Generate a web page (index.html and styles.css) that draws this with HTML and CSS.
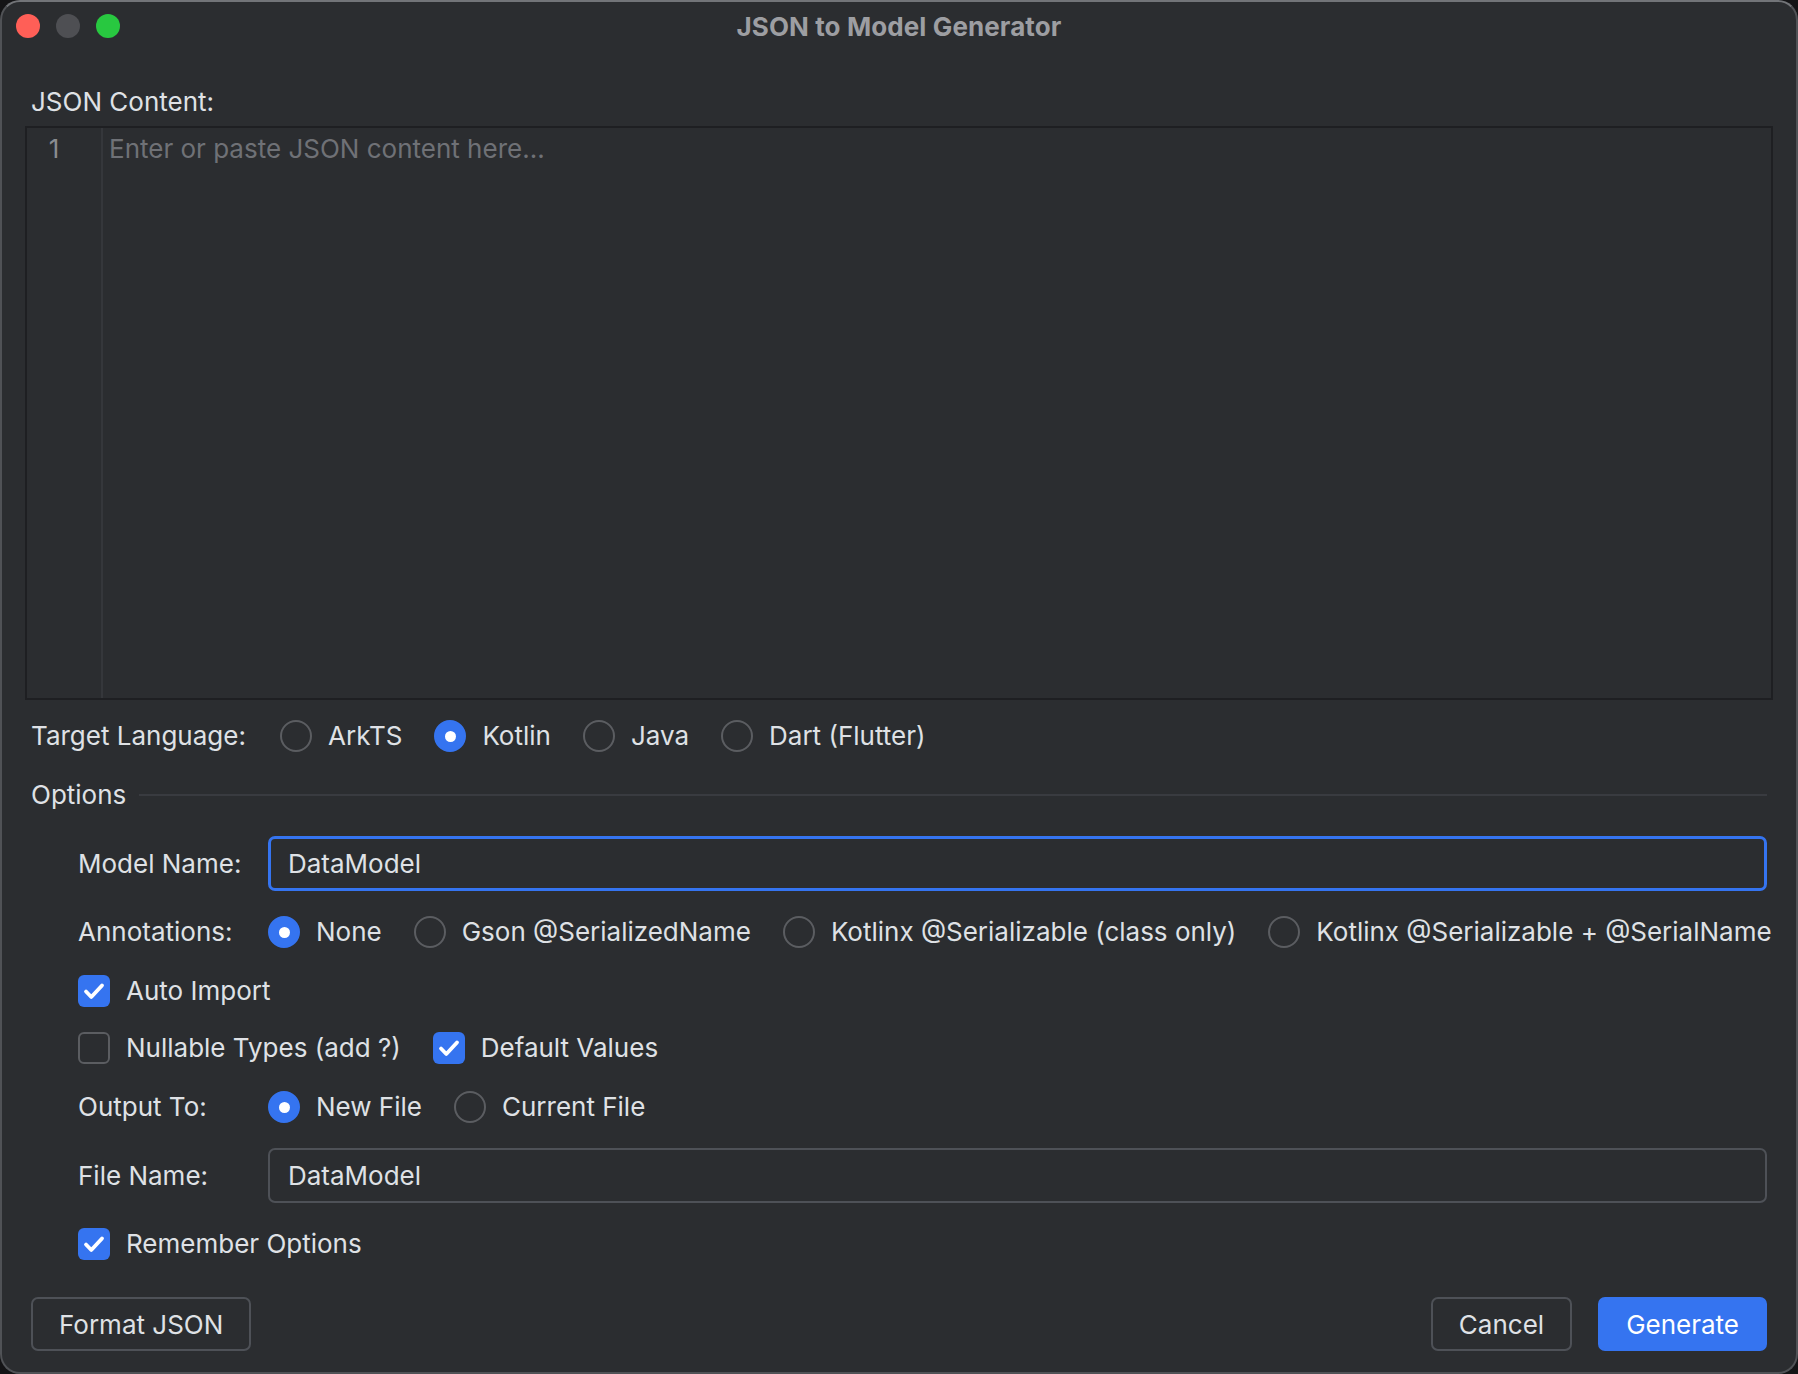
FILE: index.html
```html
<!DOCTYPE html>
<html lang="en">
<head>
  <meta charset="UTF-8" />
  <meta name="viewport" content="width=device-width, initial-scale=1.0"/>
  <title>JSON to Model Generator</title>
  <link rel="stylesheet" href="styles.css">
</head>
<body>

  <div class="window">
    <div class="titlebar">
      <div class="lights">
        <span class="light close"></span>
        <span class="light min"></span>
        <span class="light max"></span>
      </div>
      <div class="title">JSON to Model Generator</div>
      <div></div>
    </div>

    <div class="content">
      <div class="field-label">JSON Content:</div>
      <div class="editor">
        <div class="gutter">1</div>
        <div class="code"><span class="placeholder">Enter or paste JSON content here...</span></div>
      </div>

      <div class="form">
        <div class="row">
          <span class="lang-label">Target Language:</span>
          <div class="choices">
            <label class="choice"><span class="radio"></span>ArkTS</label>
            <label class="choice"><span class="radio checked"></span>Kotlin</label>
            <label class="choice"><span class="radio"></span>Java</label>
            <label class="choice"><span class="radio"></span>Dart (Flutter)</label>
          </div>
        </div>

        <div class="row group-title">
          <span>Options</span>
          <span class="rule"></span>
        </div>

        <div class="row opt">
          <span class="opt-label">Model Name:</span>
          <div class="input focused">DataModel</div>
        </div>

        <div class="row opt">
          <span class="opt-label">Annotations:</span>
          <div class="choices">
            <label class="choice"><span class="radio checked"></span>None</label>
            <label class="choice"><span class="radio"></span>Gson @SerializedName</label>
            <label class="choice"><span class="radio"></span>Kotlinx @Serializable (class only)</label>
            <label class="choice"><span class="radio"></span>Kotlinx @Serializable + @SerialName</label>
          </div>
        </div>

        <div class="row opt">
          <div class="choices">
            <label class="choice"><span class="checkbox checked"><svg viewBox="0 0 32 32"><path d="M8 16.5l5.3 5.5L24 10.5"/></svg></span>Auto Import</label>
          </div>
        </div>

        <div class="row opt close-up">
          <div class="choices">
            <label class="choice"><span class="checkbox"></span>Nullable Types (add ?)</label>
            <label class="choice"><span class="checkbox checked"><svg viewBox="0 0 32 32"><path d="M8 16.5l5.3 5.5L24 10.5"/></svg></span>Default Values</label>
          </div>
        </div>

        <div class="row opt">
          <span class="opt-label">Output To:</span>
          <div class="choices">
            <label class="choice"><span class="radio checked"></span>New File</label>
            <label class="choice"><span class="radio"></span>Current File</label>
          </div>
        </div>

        <div class="row opt">
          <span class="opt-label">File Name:</span>
          <div class="input">DataModel</div>
        </div>

        <div class="row opt">
          <div class="choices">
            <label class="choice"><span class="checkbox checked"><svg viewBox="0 0 32 32"><path d="M8 16.5l5.3 5.5L24 10.5"/></svg></span>Remember Options</label>
          </div>
        </div>

        <div class="actions">
          <button class="btn">Format JSON</button>
          <div class="actions-right">
            <button class="btn">Cancel</button>
            <button class="btn primary">Generate</button>
          </div>
        </div>
      </div>
    </div>
  </div>

</body>
</html>
```

FILE: styles.css
```css
* {
  margin: 0;
  padding: 0;
  box-sizing: border-box;
  font-family: Inter, 'Noto Sans', sans-serif;
}

body {
  background: #141416;
  width: 1798px;
  height: 1374px;
  overflow: hidden;
}

.window {
  height: 1374px;
  background: #2b2d30;
  border: 2px solid #505256;
  border-top-color: #727478;
  border-radius: 20px;
  color: #dfe1e5;
  font-size: 26px;
}

.titlebar {
  height: 50px;
  padding-bottom: 2px;
  display: grid;
  grid-template-columns: 1fr auto 1fr;
  align-items: center;
}

.lights {
  display: flex;
  gap: 16px;
  padding-left: 14px;
}

.light {
  width: 24px;
  height: 24px;
  border-radius: 50%;
}

.light.close { background: #ff5f57; }
.light.min { background: #4e4f53; }
.light.max { background: #28c840; }

.title {
  font-weight: 700;
  font-size: 26px;
  color: #9d9ea2;
  letter-spacing: 0.1px;
}

.content {
  padding: 0 23px;
}

.field-label {
  margin-top: 34px;
  margin-left: 6px;
  line-height: 32px;
}

.editor {
  margin-top: 8px;
  height: 574px;
  border: 2px solid #1e1f22;
  display: flex;
}

.gutter {
  width: 76px;
  border-right: 2px solid #35373b;
  color: #8a8c90;
  text-align: center;
  padding-top: 5px;
  padding-right: 20px;
  line-height: 32px;
}

.code {
  padding: 5px 6px;
  line-height: 32px;
}

.placeholder {
  color: #6f7176;
}

.form {
  margin-top: 18px;
  padding: 0 6px;
  display: flex;
  flex-direction: column;
  gap: 23px;
}

.row {
  display: flex;
  align-items: center;
  min-height: 36px;
  line-height: 36px;
  white-space: nowrap;
}

.row.close-up {
  margin-top: -2px;
}

.lang-label {
  width: 249px;
  flex-shrink: 0;
}

.choices {
  display: flex;
  align-items: center;
  gap: 32px;
}

.choice {
  display: flex;
  align-items: center;
  gap: 16px;
}

.radio {
  width: 32px;
  height: 32px;
  flex-shrink: 0;
  border-radius: 50%;
  border: 2px solid #5b5d61;
  display: flex;
  align-items: center;
  justify-content: center;
}

.radio.checked {
  background: #3574f0;
  border-color: #3574f0;
}

.radio.checked::after {
  content: "";
  width: 11px;
  height: 11px;
  border-radius: 50%;
  background: #fff;
}

.checkbox {
  width: 32px;
  height: 32px;
  flex-shrink: 0;
  border-radius: 6px;
  border: 2px solid #5b5d61;
  display: flex;
}

.checkbox.checked {
  background: #3574f0;
  border: none;
}

.checkbox svg {
  width: 32px;
  height: 32px;
  fill: none;
  stroke: #fff;
  stroke-width: 3.8;
  stroke-linecap: round;
  stroke-linejoin: round;
}

.group-title {
  gap: 13px;
}

.rule {
  flex: 1;
  height: 2px;
  background: #393b40;
}

.opt {
  padding-left: 47px;
}

.opt-label {
  width: 190px;
  flex-shrink: 0;
}

.input {
  flex: 1;
  height: 55px;
  border: 2px solid #4e5157;
  border-radius: 7px;
  padding-left: 18px;
  line-height: 51px;
}

.input.focused {
  border: 3px solid #3574f0;
  padding-left: 17px;
  line-height: 49px;
}

.actions {
  margin-top: 12px;
  display: flex;
  justify-content: space-between;
}

.actions-right {
  display: flex;
  gap: 26px;
}

.btn {
  height: 54px;
  padding: 0 26px;
  border: 2px solid #4e5157;
  border-radius: 7px;
  background: transparent;
  color: #dfe1e5;
  font-size: 26px;
}

.btn.primary {
  background: #3574f0;
  border-color: #3574f0;
  color: #fff;
}
```
